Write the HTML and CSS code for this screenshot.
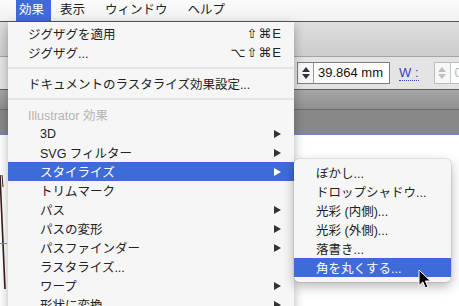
FILE: index.html
```html
<!DOCTYPE html>
<html lang="ja">
<head>
<meta charset="UTF-8" />
<title>効果メニュー</title>
<link rel="stylesheet" href="styles.css">
</head>
<body>

  <!-- Application window behind the menu -->
  <div class="app">
    <div class="menubar">
      <span class="menubar-item open">効果</span>
      <span class="menubar-item">表示</span>
      <span class="menubar-item">ウィンドウ</span>
      <span class="menubar-item">ヘルプ</span>
    </div>
    <div class="toolbar"></div>
    <div class="control-bar">
      <div class="field">
        <span class="stepper"><i class="up"></i><i class="down"></i></span>
        <span class="value">39.864 mm</span>
      </div>
      <span class="field-label">W :</span>
      <div class="field disabled">
        <span class="stepper"><i class="up"></i><i class="down"></i></span>
        <span class="value">0 mm</span>
      </div>
    </div>
    <div class="tab-bar"></div>
    <div class="doc-bar"></div>
    <div class="canvas">
      <svg class="artwork" width="459" height="169" viewBox="0 0 459 169">
        <path d="M0 40 L5 154" stroke="#3a1c1c" stroke-width="1.6" fill="none" />
        <path d="M2 40 L3 52" stroke="#3a1c1c" stroke-width="1" fill="none" />
        <path d="M0 108.5 H7" stroke="#6d84d6" stroke-width="1" />
      </svg>
    </div>
  </div>

  <!-- 効果 menu -->
  <div class="menu main-menu">
    <div class="item"><span>ジグザグを適用</span><span class="key">⇧⌘E</span></div>
    <div class="item"><span>ジグザグ...</span><span class="key">⌥⇧⌘E</span></div>
    <div class="sep"></div>
    <div class="item"><span>ドキュメントのラスタライズ効果設定...</span></div>
    <div class="sep"></div>
    <div class="item header">Illustrator 効果</div>
    <div class="item child"><span>3D</span><i class="arrow"></i></div>
    <div class="item child"><span>SVG フィルター</span><i class="arrow"></i></div>
    <div class="item child active"><span>スタイライズ</span><i class="arrow"></i></div>
    <div class="item child"><span>トリムマーク</span></div>
    <div class="item child"><span>パス</span><i class="arrow"></i></div>
    <div class="item child"><span>パスの変形</span><i class="arrow"></i></div>
    <div class="item child"><span>パスファインダー</span><i class="arrow"></i></div>
    <div class="item child"><span>ラスタライズ...</span></div>
    <div class="item child"><span>ワープ</span><i class="arrow"></i></div>
    <div class="item child"><span>形状に変換</span><i class="arrow"></i></div>
  </div>

  <!-- スタイライズ submenu -->
  <div class="menu submenu">
    <div class="item"><span>ぼかし...</span></div>
    <div class="item"><span>ドロップシャドウ...</span></div>
    <div class="item"><span>光彩 (内側)...</span></div>
    <div class="item"><span>光彩 (外側)...</span></div>
    <div class="item"><span>落書き...</span></div>
    <div class="item active"><span>角を丸くする...</span></div>
  </div>

  <svg class="cursor" width="14" height="21" viewBox="0 0 14 21">
    <path d="M1 1 L1 16.5 L4.8 12.9 L7.4 18.9 L9.9 17.8 L7.4 12 L12.5 12 Z" fill="#000" stroke="#fff" stroke-width="1" stroke-linejoin="round" />
  </svg>

</body>
</html>
```

FILE: styles.css
```css
* {
  box-sizing: border-box;
}

html,
body {
  margin: 0;
}

body {
  width: 459px;
  height: 306px;
  overflow: hidden;
  position: relative;
  background: #fff;
  font-family: "Liberation Sans", "Noto Sans CJK JP", sans-serif;
  color: #222;
}

/* ---------- window behind the menu ---------- */

.app {
  display: flex;
  flex-direction: column;
  height: 306px;
}

.menubar {
  height: 22px;
  display: flex;
  gap: 10px;
  padding-left: 16px;
  background: linear-gradient(#fbfbfb, #f1f1f1);
  border-bottom: 1px solid #555;
  font-size: 12.5px;
}

.menubar-item {
  padding: 0 5px;
  line-height: 21px;
  white-space: nowrap;
}

.menubar-item.open {
  padding: 0 7px 0 3px;
  margin-right: -6px;
  background: #3f6bd9;
  color: #fff;
}

.toolbar {
  height: 35px;
  background: linear-gradient(#dedede, #cdcdcd);
  border-bottom: 1px solid #a4a4a4;
}

.control-bar {
  height: 33px;
  display: flex;
  align-items: center;
  gap: 8px;
  padding-left: 297px;
  background: #e4e4e4;
  border-bottom: 1px solid #5f5f5f;
  white-space: nowrap;
}

.field {
  display: flex;
  height: 22px;
  width: 93px;
  flex-shrink: 0;
  border: 1px solid #7d7d7d;
  background: #fff;
}

.stepper {
  width: 16px;
  display: flex;
  flex-direction: column;
  align-items: center;
  justify-content: center;
  gap: 2px;
  border-right: 1px solid #9a9a9a;
  background: #f7f7f7;
}

.stepper i {
  width: 0;
  height: 0;
  border-left: 4px solid transparent;
  border-right: 4px solid transparent;
}

.stepper .up {
  border-bottom: 5px solid #333;
}

.stepper .down {
  border-top: 5px solid #333;
}

.value {
  padding-left: 4px;
  font-size: 13px;
  line-height: 20px;
  color: #111;
}

.field-label {
  margin-left: 1px;
  font-size: 13px;
  color: #3347c2;
  border-bottom: 1px dotted #3347c2;
  line-height: 14px;
  margin-right: 7px;
}

.field.disabled {
  border-color: #bcbcbc;
}

.field.disabled .stepper {
  border-right-color: #c8c8c8;
}

.field.disabled .up {
  border-bottom-color: #bdbdbd;
}

.field.disabled .down {
  border-top-color: #bdbdbd;
}

.field.disabled .value {
  color: #b5b5b5;
}

.tab-bar {
  height: 20px;
  background: linear-gradient(#a6a6a6, #8f8f8f);
  border-bottom: 1px solid #6c6c6c;
}

.doc-bar {
  height: 25px;
  background: #888;
  border-bottom: 2px solid #7782cc;
}

.canvas {
  flex: 1;
  background: #fff;
}

.artwork {
  display: block;
}

/* ---------- menus ---------- */

.menu {
  position: absolute;
  background: #f6f6f6;
  font-size: 12.5px;
  color: #222;
}

.main-menu {
  left: 8px;
  top: 22px;
  width: 286px;
  height: 300px;
  padding-top: 2px;
  box-shadow: 0 3px 10px rgba(0, 0, 0, 0.3);
}

.submenu {
  left: 294px;
  top: 159px;
  width: 157px;
  padding: 4px 0 5px;
  border-radius: 5px;
  box-shadow: 0 0 0 0.5px rgba(0, 0, 0, 0.15), 0 4px 12px rgba(0, 0, 0, 0.3);
}

.item {
  display: flex;
  align-items: center;
  height: 19px;
  padding: 0 13px 0 20px;
  white-space: nowrap;
}

.submenu .item {
  padding-left: 22px;
}

.item.child {
  padding-left: 32px;
}

.item.header {
  color: #b4b4b4;
}

.item.active {
  background: #3f6bd9;
  color: #fff;
}

.key {
  margin-left: auto;
  margin-right: -1px;
  font-family: "Liberation Sans", "DejaVu Sans", sans-serif;
  font-size: 13px;
  letter-spacing: 1px;
}

.arrow {
  margin-left: auto;
  width: 0;
  height: 0;
  border-left: 7px solid #333;
  border-top: 4.5px solid transparent;
  border-bottom: 4.5px solid transparent;
}

.item.active .arrow {
  border-left-color: #fff;
}

.sep {
  height: 12px;
  display: flex;
  align-items: center;
}

.sep::before {
  content: "";
  flex: 1;
  height: 2px;
  background: #e4e4e4;
}

.cursor {
  position: absolute;
  left: 418px;
  top: 269px;
}
```
